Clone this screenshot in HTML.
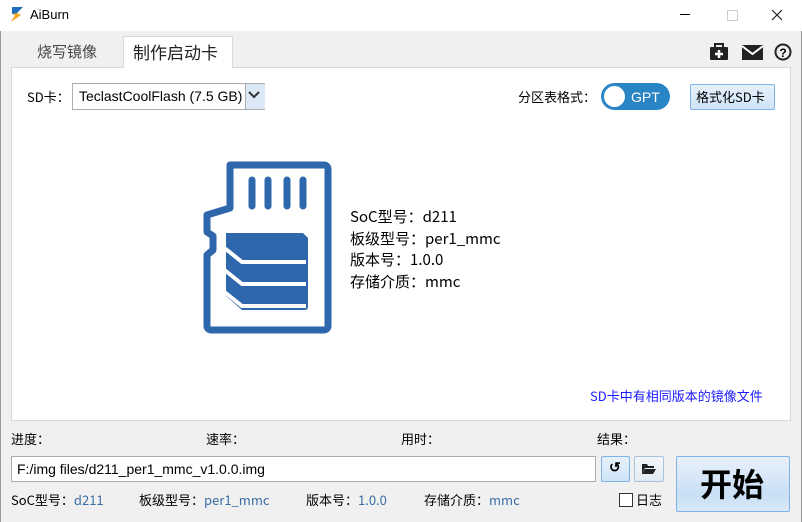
<!DOCTYPE html><html><head><meta charset="utf-8"><style>
body{margin:0;width:802px;height:522px;background:#f0f0f0;font-family:"Liberation Sans","Noto Sans CJK SC",sans-serif;position:relative;overflow:hidden;font-size:13px;color:#000}
.a{position:absolute}
.c{font-family:"Noto Sans CJK SC",sans-serif}
.btn{background:linear-gradient(#e5f1fb,#cfe4f7);border:1px solid #7eb4ea;border-radius:2px;box-sizing:border-box}
.g{color:#3a6ea5}
</style></head><body>
<div class="a" style="left:0;top:0;width:802px;height:31px;background:#fff"></div>
<svg class="a" style="left:9px;top:6px" width="16" height="18"><path d="M3 1 L14 1 L8 7 L12 9 L2 16 L6 9 L3 8Z" fill="#f5a623"/><path d="M3 1 L14 1 L8 7 L3 8Z" fill="#1e6fc0"/></svg>
<div class="a" style="left:30px;top:7px;font-size:13px">AiBurn</div>
<div class="a" style="left:680px;top:14px;width:10px;height:1px;background:#000"></div>
<div class="a" style="left:727px;top:10px;width:9px;height:9px;border:1px solid #ccc"></div>
<svg class="a" style="left:771px;top:9px" width="12" height="12"><path d="M1 1L11 11M11 1L1 11" stroke="#222" stroke-width="1.2"/></svg>
<div class="a" style="left:0;top:31px;width:1px;height:491px;background:#999"></div>
<div class="a" style="left:801px;top:31px;width:1px;height:491px;background:#999"></div>
<div class="a c" style="left:37px;top:41px;font-size:15px;color:#444">烧写镜像</div>
<div class="a" style="left:123px;top:36px;width:108px;height:33px;background:#fff;border:1px solid #d9d9d9;border-bottom:none"></div>
<div class="a c" style="left:133px;top:39px;font-size:17px;color:#222">制作启动卡</div>
<div class="a" style="left:11px;top:67px;width:778px;height:352px;background:#fff;border:1px solid #d9d9d9"></div>
<div class="a" style="left:124px;top:67px;width:108px;height:2px;background:#fff"></div>
<svg class="a" style="left:709px;top:43px" width="20" height="18"><rect x="1" y="4" width="18" height="13" rx="1" fill="#222"/><rect x="6" y="1" width="8" height="4" fill="none" stroke="#222" stroke-width="2"/><path d="M10 7v8M6 11h8" stroke="#fff" stroke-width="2.5"/></svg>
<svg class="a" style="left:742px;top:45px" width="21" height="15"><rect width="21" height="15" fill="#222"/><path d="M0 1 L10.5 9 L21 1" stroke="#fff" stroke-width="2" fill="none"/></svg>
<svg class="a" style="left:774px;top:43px" width="18" height="18"><circle cx="9" cy="9" r="7.5" fill="none" stroke="#222" stroke-width="2"/><text x="9" y="14" text-anchor="middle" font-size="12" font-weight="bold" font-family="Liberation Sans">?</text></svg>
<div class="a c" style="left:27px;top:87px">SD卡：</div>
<div class="a" style="left:72px;top:83px;width:193px;height:27px;border:1px solid #adadad;background:#fff;box-sizing:border-box"></div>
<div class="a" style="left:79px;top:88px;font-size:14px">TeclastCoolFlash (7.5 GB)</div>
<div class="a" style="left:245px;top:84px;width:19px;height:25px;background:#dbe8f6;border-left:1px solid #adadad"></div>
<svg class="a" style="left:248px;top:91px" width="12" height="8"><path d="M1 1 L6 6 L11 1" stroke="#333" stroke-width="2" fill="none"/></svg>
<div class="a c" style="left:518px;top:87px">分区表格式：</div>
<div class="a" style="left:601px;top:83px;width:69px;height:27px;border-radius:14px;background:#2a85c5"></div>
<div class="a" style="left:604px;top:86px;width:21px;height:21px;border-radius:50%;background:#fff"></div>
<div class="a" style="left:631px;top:89px;color:#fff;font-size:14px">GPT</div>
<div class="a btn" style="left:690px;top:84px;width:85px;height:26px"></div>
<div class="a c" style="left:696px;top:87px;font-size:13px">格式化SD卡</div>
<svg class="a" style="left:200px;top:160px" width="135" height="180">
<path d="M30 5 H124 a4 4 0 0 1 4 4 V166 a4 4 0 0 1 -4 4 H11 a4 4 0 0 1 -4 -4 V95 L13 90 V76 L7 72 V55 L30 48Z" fill="none" stroke="#2e67ab" stroke-width="7" stroke-linejoin="round"/>
<g stroke="#2e67ab" stroke-width="7" stroke-linecap="round"><path d="M52 20V46M68 20V46M87 20V46M103 20V46"/></g>
<path d="M26 73 H103 L108 78 V147 a3 3 0 0 1 -3 3 H42 L26 136Z" fill="#2e67ab"/>
<g stroke="#fff" stroke-width="4" fill="none"><path d="M22 86 L42 102 H106"/><path d="M22 108 L42 124 H106"/><path d="M22 130 L42 146 H106"/></g>
<path d="M20 134 L42 152 H20Z" fill="#fff"/>
</svg>
<div class="a c" style="left:350px;top:206px;font-size:15px;line-height:21.5px">SoC型号：d211<br>板级型号：per1_mmc<br>版本号：1.0.0<br>存储介质：mmc</div>
<div class="a c" style="left:590px;top:386px;color:#1a1aff">SD卡中有相同版本的镜像文件</div>
<div class="a c" style="left:11px;top:429px">进度：</div>
<div class="a c" style="left:206px;top:429px">速率：</div>
<div class="a c" style="left:401px;top:429px">用时：</div>
<div class="a c" style="left:597px;top:429px">结果：</div>
<div class="a" style="left:11px;top:456px;width:585px;height:26px;background:#fff;border:1px solid #adadad;box-sizing:border-box"></div>
<div class="a" style="left:17px;top:461px;font-size:14px">F:/img files/d211_per1_mmc_v1.0.0.img</div>
<div class="a btn" style="left:601px;top:456px;width:29px;height:26px"></div>
<div class="a" style="left:609px;top:459px;font-size:14px;font-weight:bold">↺</div>
<div class="a btn" style="left:634px;top:456px;width:30px;height:26px;background:linear-gradient(#f3f6f9,#e2ebf3);border-color:#a9c3dc"></div>
<svg class="a" style="left:641px;top:463px" width="16" height="12"><path d="M1 1h5l1 2h6v2H4L1 11Z M4 6h11l-3 5H1Z" fill="#222"/></svg>
<div class="a btn" style="left:676px;top:456px;width:114px;height:56px;background:linear-gradient(#e8f1fb,#c9dff5 70%,#d8e8f8)"></div>
<div class="a c" style="left:700px;top:460px;font-size:32px;font-weight:bold">开始</div>
<div class="a c" style="left:11px;top:490px">SoC型号：<span class="g">d211</span></div>
<div class="a c" style="left:139px;top:490px">板级型号：<span class="g">per1_mmc</span></div>
<div class="a c" style="left:306px;top:490px">版本号：<span class="g">1.0.0</span></div>
<div class="a c" style="left:424px;top:490px">存储介质：<span class="g">mmc</span></div>
<div class="a" style="left:619px;top:493px;width:12px;height:12px;border:1px solid #333;background:#fff"></div>
<div class="a c" style="left:636px;top:490px">日志</div>
</body></html>
